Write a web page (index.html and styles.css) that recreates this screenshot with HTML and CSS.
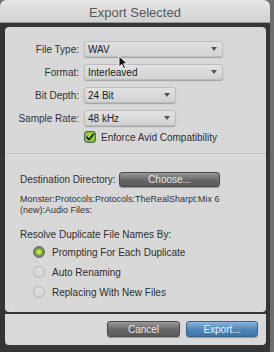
FILE: index.html
```html
<!DOCTYPE html>
<html>
<head>
<meta charset="utf-8">
<link rel="stylesheet" href="styles.css">
</head>
<body>
<div class="window">
  <div class="titlebar">Export Selected</div>
  <div class="frame">
    <div class="panel">
      <div class="fields">
        <label class="lbl">File Type:</label>
        <div class="select wide"><span>WAV</span><i class="arrow"></i></div>
        <label class="lbl">Format:</label>
        <div class="select wide"><span>Interleaved</span><i class="arrow"></i></div>
        <label class="lbl">Bit Depth:</label>
        <div class="select short"><span>24 Bit</span><i class="arrow"></i></div>
        <label class="lbl">Sample Rate:</label>
        <div class="select short"><span>48 kHz</span><i class="arrow"></i></div>
      </div>
      <div class="check-row">
        <span class="checkbox">
          <svg width="10" height="10" viewBox="0 0 10 10"><path d="M1.8 5.2 L4 7.6 L8.4 2.2" fill="none" stroke="#1f2a12" stroke-width="1.8" stroke-linecap="round" stroke-linejoin="round"/></svg>
        </span>
        <span class="check-text">Enforce Avid Compatibility</span>
      </div>
      <div class="sep"></div>
      <div class="dest">
        <div class="dest-row">
          <span class="dest-label">Destination Directory:</span>
          <span class="btn dark choose">Choose...</span>
        </div>
        <div class="path">Monster:Protocols:Protocols:TheRealSharpt:Mix 6<br>(new):Audio Files:</div>
        <div class="resolve">Resolve Duplicate File Names By:</div>
        <div class="radios">
          <div class="radio-row"><span class="radio on"></span><span>Prompting For Each Duplicate</span></div>
          <div class="radio-row"><span class="radio"></span><span>Auto Renaming</span></div>
          <div class="radio-row"><span class="radio"></span><span>Replacing With New Files</span></div>
        </div>
      </div>
    </div>
    <div class="buttonbar">
      <span class="btn dark cancel">Cancel</span>
      <span class="btn blue export">Export...</span>
    </div>
  </div>
</div>
<svg class="cursor" width="12" height="16" viewBox="0 0 12 16"><path d="M1 1 L1 12 L3.8 9.4 L5.8 13.8 L7.6 13 L5.7 8.7 L9.4 8.7 Z" fill="#111" stroke="#f4f4f4" stroke-width="1" stroke-linejoin="round"/></svg>
</body>
</html>
```
FILE: styles.css
```css
html, body {
  margin: 0;
  padding: 0;
}
body {
  width: 274px;
  height: 352px;
  background: #6e6e6e;
  font-family: "Liberation Sans", Arial, sans-serif;
  color: #2e2e2e;
  overflow: hidden;
  position: relative;
}
.window {
  width: 270px;
  height: 352px;
  background: #353535;
  border-radius: 6px 6px 0 0;
}
.titlebar {
  height: 23px;
  line-height: 25px;
  text-align: center;
  font-size: 13px;
  color: #585858;
  background: linear-gradient(#e6e6e6, #d2d2d2);
  border-radius: 6px 6px 0 0;
  border-bottom: 1px solid #9a9a9a;
  box-sizing: border-box;
}
.frame {
  padding: 4px 4px 0 5px;
}
.panel {
  height: 285px;
  box-sizing: border-box;
  background: #d8d8d8;
  border-radius: 4px;
  padding-top: 14px;
}
.fields {
  display: grid;
  grid-template-columns: 74px auto;
  column-gap: 5px;
  row-gap: 7px;
  grid-auto-rows: 16px;
  align-items: center;
  font-size: 10px;
}
.lbl {
  text-align: right;
  color: #333;
}
.select {
  height: 16px;
  box-sizing: border-box;
  border-radius: 3px;
  background: linear-gradient(#e2e2e2, #d2d2d2);
  border: 1px solid #bdbdbd;
  box-shadow: 0 1px 1px rgba(0,0,0,0.25);
  display: flex;
  align-items: center;
  padding-left: 3px;
  padding-right: 5px;
  color: #222;
}
.select span { flex: 1; }
.wide { width: 139px; }
.short { width: 92px; }
.arrow {
  width: 0;
  height: 0;
  border-left: 3px solid transparent;
  border-right: 3px solid transparent;
  border-top: 4px solid #555;
}
.check-row {
  margin-top: 5px;
  margin-left: 79px;
  height: 12px;
  display: flex;
  align-items: center;
  gap: 5px;
  font-size: 10px;
}
.checkbox {
  width: 12px;
  height: 12px;
  box-sizing: border-box;
  border-radius: 3px;
  border: 1px solid #5e5e5e;
  background: radial-gradient(circle at 50% 45%, #a8e04a, #6fb52a);
  display: flex;
  align-items: center;
  justify-content: center;
}
.checkbox svg { display: block; }
.sep {
  margin-top: 10px;
  height: 1px;
  background: #bcbcbc;
  box-shadow: 0 1px 0 #e4e4e4;
}
.dest {
  padding-left: 15px;
  font-size: 10px;
}
.dest-row {
  margin-top: 18px;
  display: flex;
  align-items: center;
}
.dest-label {
  width: 99px;
}
.btn {
  height: 16px;
  box-sizing: border-box;
  border-radius: 3px;
  display: flex;
  align-items: center;
  justify-content: center;
  font-size: 10px;
}
.dark {
  background: linear-gradient(#9a9a9a, #666 55%, #5a5a5a);
  border: 1px solid #4a4a4a;
  color: #e8e8e8;
  box-shadow: 0 1px 1px rgba(0,0,0,0.3);
}
.blue {
  background: linear-gradient(#8cb6dc, #4f85b8 55%, #3f75a8);
  border: 1px solid #3a648c;
  color: #f0f4f8;
  box-shadow: 0 1px 1px rgba(0,0,0,0.3);
}
.choose {
  width: 101px;
  height: 15px;
}
.path {
  margin-top: 7px;
  font-size: 9px;
  line-height: 11px;
  color: #333;
}
.resolve {
  margin-top: 13px;
  line-height: 12px;
}
.radios {
  margin-top: 1px;
  padding-left: 13px;
}
.radio-row {
  height: 20px;
  display: flex;
  align-items: center;
  gap: 7px;
}
.radio {
  width: 12px;
  height: 12px;
  box-sizing: border-box;
  border-radius: 50%;
  border: 1px solid #b4b4b4;
  background: linear-gradient(#e0e0e0, #d4d4d4);
}
.radio.on {
  border: 1px solid #666;
  background: radial-gradient(circle, #d8f56a 0, #9ed232 35%, #6d8a3a 55%, #8a8a8a 75%);
}
.buttonbar {
  margin-top: 2px;
  height: 31px;
  background: #d9d9d9;
  border-radius: 0 0 4px 4px;
  display: flex;
  justify-content: flex-end;
  align-items: flex-start;
  padding: 7px 8px 0 0;
  box-sizing: border-box;
  gap: 6px;
}
.cancel { width: 73px; }
.export { width: 72px; }
.cursor {
  position: absolute;
  left: 118px;
  top: 55px;
}
```
